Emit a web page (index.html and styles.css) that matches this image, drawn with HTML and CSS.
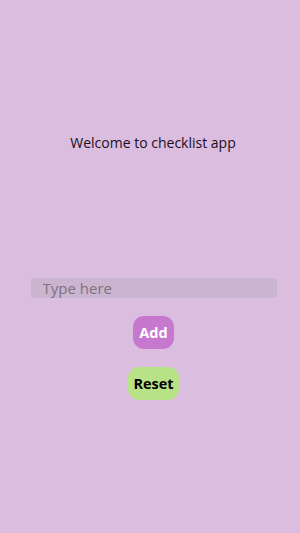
FILE: index.html
```html
<html>
	<head>
		<meta charset="utf-8">
		<title>Checklist</title>
		<link rel="stylesheet" href="styles.css">
	</head>
	<body>
		<div class="app">
			<div class="welcome">Welcome to checklist app</div>
			<div class="form">
				<input class="task-input" type="text" placeholder="Type here">
				<button class="btn btn-add">Add</button>
				<button class="btn btn-reset">Reset</button>
			</div>
		</div>
	</body>
</html>
```

FILE: styles.css
```css
body {
	margin: 0;
	background-color: #dbbde0;
	font-family: "Open Sans", "Noto Sans", sans-serif;
}

.app {
	height: 533px;
	display: flex;
	flex-direction: column;
	align-items: center;
}

.welcome {
	margin-top: 133px;
	font-size: 14px;
	color: #1a0f1c;
	margin-left: 6px;
}

.form {
	margin-top: 126px;
	margin-left: 7px;
	display: flex;
	flex-direction: column;
	align-items: center;
	gap: 18px;
}

.task-input {
	width: 246px;
	height: 20px;
	box-sizing: border-box;
	border: none;
	border-radius: 4px;
	background-color: #cbb4cf;
	padding: 0 12px;
	font-family: "Open Sans", sans-serif;
	font-size: 15px;
	color: #333;
	outline: none;
}

.task-input::placeholder {
	color: #7c737d;
}

.btn {
	height: 33px;
	border: none;
	border-radius: 11px;
	font-family: "Open Sans", sans-serif;
	font-weight: bold;
	font-size: 14.5px;
	padding: 0;
}

.btn-add {
	width: 41px;
	background-color: #c678cf;
	color: white;
}

.btn-reset {
	width: 51px;
	background-color: #b8e286;
	color: black;
}
```
